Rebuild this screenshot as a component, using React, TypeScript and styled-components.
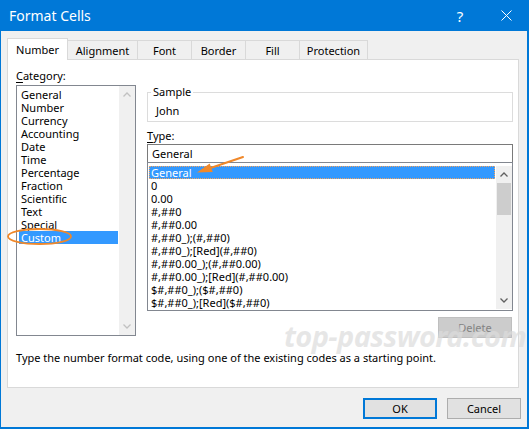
import React from "react";
import styled, { createGlobalStyle } from "styled-components";

const Global = createGlobalStyle`
  html, body { margin: 0; padding: 0; background: #ffffff; }
  * { box-sizing: border-box; }
`;

const Window = styled.div`
  position: relative;
  width: 529px;
  height: 429px;
  background: #f0f0f0;
  border-left: 1px solid #0078d7;
  border-right: 2px solid #0078d7;
  border-bottom: 2px solid #0078d7;
  display: flex;
  flex-direction: column;
  font-family: "Noto Sans", sans-serif;
  font-size: 11px;
  color: #000;
  overflow: hidden;
`;

const TitleBar = styled.div`
  height: 31px;
  flex: none;
  background: #0078d7;
  color: #fff;
  display: flex;
  align-items: center;
  margin-right: -2px;
  margin-left: -1px;
  padding-left: 9px;
`;

const Title = styled.div`
  flex: 1;
  font-size: 14px;
  line-height: 20px;
`;

const TitleButton = styled.div`
  width: 46px;
  height: 31px;
  display: flex;
  align-items: center;
  justify-content: center;
  font-size: 15px;
`;

const Body = styled.div`
  padding: 7px 8px 0 6px;
  display: flex;
  flex-direction: column;
`;

const TabStrip = styled.div`
  display: flex;
  align-items: flex-end;
  height: 22px;
  margin-bottom: -1px;
  position: relative;
  z-index: 1;
`;

const Tab = styled.div<{ $w: number; $active?: boolean }>`
  width: ${(p) => p.$w}px;
  height: ${(p) => (p.$active ? 22 : 20)}px;
  margin-left: -1px;
  &:first-child { margin-left: 0; }
  border: 1px solid #d9d9d9;
  border-bottom: ${(p) => (p.$active ? "none" : "1px solid #d9d9d9")};
  background: ${(p) => (p.$active ? "#ffffff" : "#f0f0f0")};
  display: flex;
  align-items: center;
  justify-content: center;
  padding-top: ${(p) => (p.$active ? 0 : 1)}px;
  position: relative;
  z-index: ${(p) => (p.$active ? 2 : 1)};
`;

const Panel = styled.div`
  height: 329px;
  background: #ffffff;
  border: 1px solid #d9d9d9;
  padding: 8px 5px 0 8px;
  display: flex;
  flex-direction: column;
`;

const Columns = styled.div`
  display: flex;
  gap: 11px;
  align-items: flex-start;
`;

const LeftCol = styled.div`
  width: 120px;
  display: flex;
  flex-direction: column;
`;

const RightCol = styled.div`
  width: 366px;
  padding-top: 24px;
  display: flex;
  flex-direction: column;
`;

const Label = styled.div`
  height: 16px;
  line-height: 16px;
  margin-bottom: 1px;
  u { text-decoration: underline; text-underline-offset: 2px; }
`;

const ListBox = styled.div<{ $h: number }>`
  height: ${(p) => p.$h}px;
  border: 1px solid #828790;
  background: #fff;
  display: flex;
`;

const Items = styled.div<{ $pt: number; $pl: number }>`
  flex: 1;
  padding: ${(p) => p.$pt}px 1px 0 ${(p) => p.$pl}px;
  overflow: hidden;
  display: flex;
  flex-direction: column;
`;

const Item = styled.div<{ $sel?: boolean; $focus?: boolean; $pad: number }>`
  height: 13px;
  flex: none;
  line-height: 13px;
  padding-left: ${(p) => p.$pad}px;
  white-space: nowrap;
  background: ${(p) => (p.$sel ? "#3399ff" : "transparent")};
  color: ${(p) => (p.$sel ? "#ffffff" : "#000000")};
  ${(p) => (p.$focus ? "outline: 1px dotted #f4a460; outline-offset: -1px;" : "")}
`;

const ScrollBar = styled.div<{ $pt: number; $pb: number }>`
  width: 16px;
  flex: none;
  padding: ${(p) => p.$pt}px 0 ${(p) => p.$pb}px 0;
  display: flex;
  flex-direction: column;
  background: #f0f0f0;
  background-clip: content-box;
`;

const ScrollArrow = styled.div`
  height: 17px;
  display: flex;
  align-items: center;
  justify-content: center;
  background: #f0f0f0;
`;

const Track = styled.div`
  flex: 1;
  padding: 0 1px;
  display: flex;
  flex-direction: column;
`;

const Thumb = styled.div`
  height: 32px;
  background: #cdcdcd;
`;

const GroupBox = styled.div`
  position: relative;
  border: 1px solid #dcdcdc;
  height: 30px;
  padding-top: 10px;
`;

const Legend = styled.div`
  position: absolute;
  left: 3px;
  top: -9px;
  padding: 0 2px;
  line-height: 16px;
  background: #fff;
`;

const SampleText = styled.div`
  padding-left: 8px;
  line-height: 16px;
`;

const TypeLabel = styled(Label)`
  margin-top: 6px;
  margin-bottom: 0;
`;

const TextInput = styled.div`
  height: 19px;
  border: 1px solid #7a7a7a;
  padding-left: 4px;
  line-height: 17px;
  background: #fff;
`;

const TypeList = styled(ListBox)`
  margin-top: -1px;
`;

const ButtonRow = styled.div`
  display: flex;
  justify-content: flex-end;
  margin-top: 6px;
  padding-right: 1px;
`;

const Button = styled.div<{ $variant?: "default" | "disabled" | "normal" }>`
  width: 74px;
  height: 21px;
  display: flex;
  align-items: center;
  justify-content: center;
  background: ${(p) => (p.$variant === "disabled" ? "#cccccc" : "#e1e1e1")};
  border: ${(p) =>
    p.$variant === "default"
      ? "2px solid #0078d7"
      : p.$variant === "disabled"
      ? "1px solid #bfbfbf"
      : "1px solid #adadad"};
  color: ${(p) => (p.$variant === "disabled" ? "#838383" : "#000")};
`;

const Description = styled.div`
  margin-top: 12px;
  line-height: 16px;
`;

const Footer = styled.div`
  display: flex;
  justify-content: flex-end;
  gap: 10px;
  padding: 10px 6px 0 0;
`;

const Watermark = styled.div`
  position: absolute;
  left: 283px;
  top: 318px;
  font-family: "Noto Sans", sans-serif;
  font-size: 29px;
  font-weight: 700;
  font-style: italic;
  letter-spacing: -0.6px;
  line-height: 36px;
  color: rgba(220, 220, 220, 0.7);
  white-space: nowrap;
  pointer-events: none;
`;

const Overlay = styled.svg`
  position: absolute;
  left: -1px;
  top: 0;
  pointer-events: none;
`;

const Chevron = ({ dir, color }: { dir: "up" | "down"; color: string }) => (
  <svg width="8" height="5" viewBox="0 0 8 5">
    <polyline
      points={dir === "up" ? "0.5,4.5 4,1 7.5,4.5" : "0.5,0.5 4,4 7.5,0.5"}
      fill="none"
      stroke={color}
      strokeWidth="1.3"
    />
  </svg>
);

const CloseIcon = () => (
  <svg width="11" height="11" viewBox="0 0 11 11">
    <path d="M0.5 0.5 L10.5 10.5 M10.5 0.5 L0.5 10.5" stroke="#fff" strokeWidth="1" />
  </svg>
);

const categories = [
  "General",
  "Number",
  "Currency",
  "Accounting",
  "Date",
  "Time",
  "Percentage",
  "Fraction",
  "Scientific",
  "Text",
  "Special",
  "Custom",
];

const formats = [
  "General",
  "0",
  "0.00",
  "#,##0",
  "#,##0.00",
  "#,##0_);(#,##0)",
  "#,##0_);[Red](#,##0)",
  "#,##0.00_);(#,##0.00)",
  "#,##0.00_);[Red](#,##0.00)",
  "$#,##0_);($#,##0)",
  "$#,##0_);[Red]($#,##0)",
];

const tabs: { name: string; w: number }[] = [
  { name: "Number", w: 61 },
  { name: "Alignment", w: 71 },
  { name: "Font", w: 55 },
  { name: "Border", w: 55 },
  { name: "Fill", w: 55 },
  { name: "Protection", w: 69 },
];

export default function App() {
  return (
    <>
      <Global />
      <Window>
        <TitleBar>
          <Title>Format Cells</Title>
          <TitleButton>?</TitleButton>
          <TitleButton>
            <CloseIcon />
          </TitleButton>
        </TitleBar>
        <Body>
          <TabStrip>
            {tabs.map((t, i) => (
              <Tab key={t.name} $w={t.w} $active={i === 0}>
                {t.name}
              </Tab>
            ))}
          </TabStrip>
          <Panel>
            <Columns>
              <LeftCol>
                <Label>
                  <u>C</u>ategory:
                </Label>
                <ListBox $h={251}>
                  <Items $pt={2} $pl={2}>
                    {categories.map((c) => (
                      <Item key={c} $pad={2} $sel={c === "Custom"}>
                        {c}
                      </Item>
                    ))}
                  </Items>
                  <ScrollBar $pt={0} $pb={0}>
                    <ScrollArrow>
                      <Chevron dir="up" color="#c1c1c1" />
                    </ScrollArrow>
                    <Track />
                    <ScrollArrow>
                      <Chevron dir="down" color="#c1c1c1" />
                    </ScrollArrow>
                  </ScrollBar>
                </ListBox>
              </LeftCol>
              <RightCol>
                <GroupBox>
                  <Legend>Sample</Legend>
                  <SampleText>John</SampleText>
                </GroupBox>
                <TypeLabel>
                  <u>T</u>ype:
                </TypeLabel>
                <TextInput>General</TextInput>
                <TypeList $h={149}>
                  <Items $pt={3} $pl={1}>
                    {formats.map((f, i) => (
                      <Item key={f} $pad={2} $sel={i === 0} $focus={i === 0}>
                        {f}
                      </Item>
                    ))}
                  </Items>
                  <ScrollBar $pt={3} $pb={1}>
                    <ScrollArrow>
                      <Chevron dir="up" color="#606060" />
                    </ScrollArrow>
                    <Track>
                      <Thumb />
                    </Track>
                    <ScrollArrow>
                      <Chevron dir="down" color="#606060" />
                    </ScrollArrow>
                  </ScrollBar>
                </TypeList>
                <ButtonRow>
                  <Button $variant="disabled">Delete</Button>
                </ButtonRow>
              </RightCol>
            </Columns>
            <Description>
              Type the number format code, using one of the existing codes as a starting point.
            </Description>
          </Panel>
        </Body>
        <Footer>
          <Button $variant="default">OK</Button>
          <Button $variant="normal">Cancel</Button>
        </Footer>
        <Watermark>top-password.com</Watermark>
        <Overlay width="529" height="429" viewBox="0 0 529 429">
          <ellipse cx="39.5" cy="236.5" rx="31.5" ry="7.5" fill="none" stroke="#f0882a" strokeWidth="1.8" />
          <line x1="243" y1="157" x2="209" y2="168.5" stroke="#f0882a" strokeWidth="2" strokeLinecap="round" />
          <polygon points="197,172.5 209.7,163.4 212.7,172" fill="#f0882a" />
        </Overlay>
      </Window>
    </>
  );
}
